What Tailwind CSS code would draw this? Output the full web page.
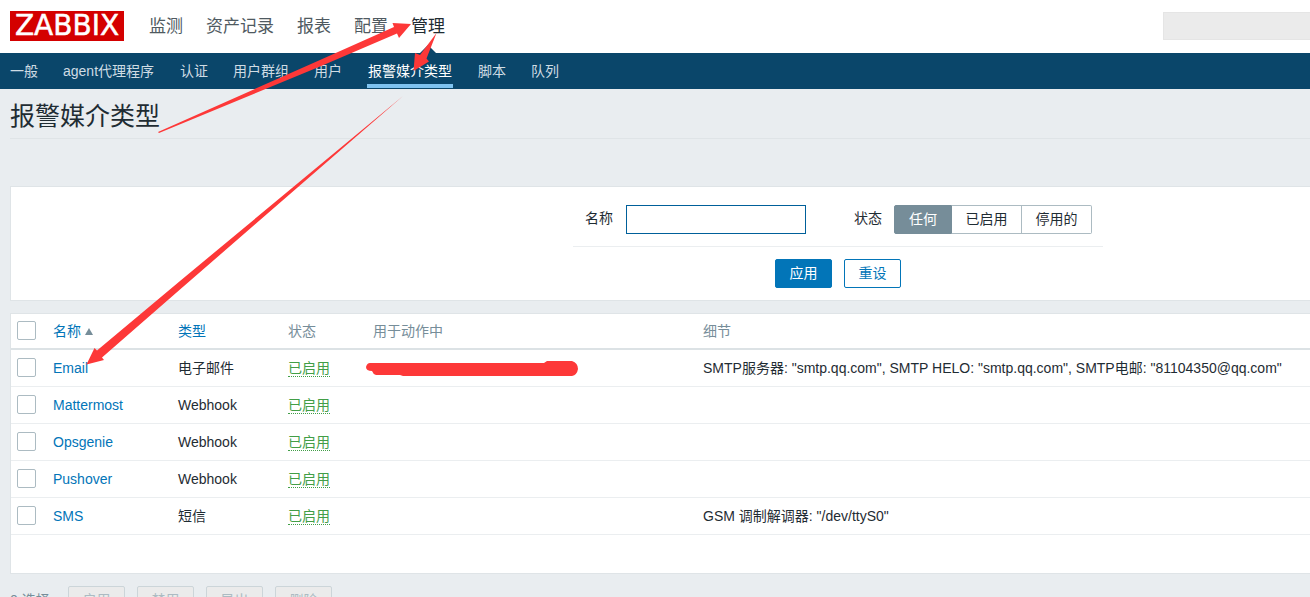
<!DOCTYPE html>
<html lang="zh-CN">
<head>
<meta charset="utf-8">
<title>报警媒介类型</title>
<script src="https://cdn.jsdelivr.net/npm/@tailwindcss/browser@4"></script>
</head>
<body class="relative h-screen overflow-hidden bg-[#e9edf0] font-['Liberation_Sans','Noto_Sans_CJK_SC',sans-serif] text-[14px] leading-[18px] text-[#1f2c33]">
<header>
  <div class="flex h-[53px] items-center bg-white pb-px pl-[10px]">
    <a href="#" class="mr-[25px] flex h-[30px] w-[114px] items-center justify-center bg-[#d40000] font-['DejaVu_Sans',sans-serif] text-[28px] leading-[30px] text-white [-webkit-text-stroke:0.5px_white]">ZABBIX</a>
    <nav aria-label="主菜单" class="flex h-[52px] gap-[23px] text-[17px] leading-[53px] text-[#4f5a61]">
      <a href="#">监测</a>
      <a href="#">资产记录</a>
      <a href="#">报表</a>
      <a href="#">配置</a>
      <a href="#" class="relative text-[#1f2c33]">管理<span class="absolute -bottom-px left-1/2 -ml-2 size-0 border-x-8 border-b-8 border-x-transparent border-b-[#0a466a]"></span></a>
    </nav>
    <input type="search" aria-label="搜索" class="ml-auto h-7 w-[147px] border border-r-0 border-[#e5e5e5] bg-[#ebebeb]">
  </div>
  <nav aria-label="管理" class="flex h-9 gap-[25px] bg-[#0a466a] pl-[10px] leading-9 text-[#cfdce4]">
    <a href="#">一般</a>
    <a href="#" class="pr-px">agent代理程序</a>
    <a href="#">认证</a>
    <a href="#">用户群组</a>
    <a href="#">用户</a>
    <a href="#" class="h-[35px] border-b-4 border-[#7fc3f0] px-px text-white">报警媒介类型</a>
    <a href="#">脚本</a>
    <a href="#">队列</a>
  </nav>
</header>
<main class="pl-[10px]">
  <h1 class="h-[50px] border-b border-[#dfe4e7] text-[25px] leading-[54px]">报警媒介类型</h1>

  <form class="mt-[47px] border border-r-0 border-[#dfe4e7] bg-white pt-[18px] pb-3 pl-[562px]">
    <div class="w-[530px]">
      <div class="flex border-b border-[#ebeef0] pb-3 pl-3 leading-[27px]">
        <label for="name" class="w-[41px]">名称</label>
        <input id="name" type="text" class="h-[29px] w-[180px] border border-[#00609a] px-1 outline-none">
        <span id="status" class="ml-12 w-10">状态</span>
        <div role="radiogroup" aria-labelledby="status" class="flex text-center">
          <label class="w-[58px] rounded-l-xs border border-[#768d99] bg-[#768d99] text-white"><input type="radio" name="st" checked class="sr-only">任何</label>
          <label class="w-[70px] border-y border-r border-[#acbbc2]"><input type="radio" name="st" class="sr-only">已启用</label>
          <label class="w-[70px] rounded-r-xs border-y border-r border-[#acbbc2]"><input type="radio" name="st" class="sr-only">停用的</label>
        </div>
      </div>
      <div class="flex justify-center gap-3 pt-3 leading-[27px]">
        <button type="button" class="w-[57px] rounded-xs border border-[#0275b8] bg-[#0275b8] text-white">应用</button>
        <button type="button" class="w-[57px] rounded-xs border border-[#0275b8] text-[#0275b8]">重设</button>
      </div>
    </div>
  </form>

  <div class="mt-3 border border-r-0 border-[#dfe4e7] bg-white pb-[38px]">
    <table class="w-full table-fixed border-separate border-spacing-0 text-left">
      <colgroup><col class="w-[37px]"><col class="w-[125px]"><col class="w-[110px]"><col class="w-[85px]"><col class="w-[330px]"><col></colgroup>
      <thead>
        <tr class="h-9 text-[#768d99] *:border-b-2 *:border-[#dce2e5] *:px-[5px] *:font-normal">
          <th class="pb-0.5"><input type="checkbox" aria-label="全选" class="ml-px block size-[19px] appearance-none rounded-xs border border-[#acbbc2] bg-white"></th>
          <th><a href="#" class="flex items-center gap-1 text-[#0275b8]">名称<span class="size-0 border-x-4 border-b-[7px] border-x-transparent border-b-[#768d99]"></span></a></th>
          <th><a href="#" class="text-[#0275b8]">类型</a></th>
          <th>状态</th><th>用于动作中</th><th>细节</th>
        </tr>
      </thead>
      <tbody>
        <tr class="h-[37px] *:border-b *:border-[#ebeef0] *:px-[5px]">
          <td class="pb-0.5"><input type="checkbox" aria-label="Email" class="ml-px block size-[19px] appearance-none rounded-xs border border-[#acbbc2] bg-white"></td>
          <td><a href="#" class="text-[#0275b8]">Email</a></td><td>电子邮件</td>
          <td><a href="#" class="inline-block h-[18px] border-b border-dotted border-[#429e47] text-[#429e47]">已启用</a></td><td></td>
          <td class="whitespace-nowrap">SMTP服务器: "smtp.qq.com", SMTP HELO: "smtp.qq.com", SMTP电邮: "81104350@qq.com"</td>
        </tr>
        <tr class="h-[37px] *:border-b *:border-[#ebeef0] *:px-[5px]">
          <td class="pb-0.5"><input type="checkbox" aria-label="Mattermost" class="ml-px block size-[19px] appearance-none rounded-xs border border-[#acbbc2] bg-white"></td>
          <td><a href="#" class="text-[#0275b8]">Mattermost</a></td><td>Webhook</td>
          <td><a href="#" class="inline-block h-[18px] border-b border-dotted border-[#429e47] text-[#429e47]">已启用</a></td><td></td><td></td>
        </tr>
        <tr class="h-[37px] *:border-b *:border-[#ebeef0] *:px-[5px]">
          <td class="pb-0.5"><input type="checkbox" aria-label="Opsgenie" class="ml-px block size-[19px] appearance-none rounded-xs border border-[#acbbc2] bg-white"></td>
          <td><a href="#" class="text-[#0275b8]">Opsgenie</a></td><td>Webhook</td>
          <td><a href="#" class="inline-block h-[18px] border-b border-dotted border-[#429e47] text-[#429e47]">已启用</a></td><td></td><td></td>
        </tr>
        <tr class="h-[37px] *:border-b *:border-[#ebeef0] *:px-[5px]">
          <td class="pb-0.5"><input type="checkbox" aria-label="Pushover" class="ml-px block size-[19px] appearance-none rounded-xs border border-[#acbbc2] bg-white"></td>
          <td><a href="#" class="text-[#0275b8]">Pushover</a></td><td>Webhook</td>
          <td><a href="#" class="inline-block h-[18px] border-b border-dotted border-[#429e47] text-[#429e47]">已启用</a></td><td></td><td></td>
        </tr>
        <tr class="h-[37px] *:border-b *:border-[#ebeef0] *:px-[5px]">
          <td class="pb-0.5"><input type="checkbox" aria-label="SMS" class="ml-px block size-[19px] appearance-none rounded-xs border border-[#acbbc2] bg-white"></td>
          <td><a href="#" class="text-[#0275b8]">SMS</a></td><td>短信</td>
          <td><a href="#" class="inline-block h-[18px] border-b border-dotted border-[#429e47] text-[#429e47]">已启用</a></td><td></td>
          <td>GSM 调制解调器: "/dev/ttyS0"</td>
        </tr>
      </tbody>
    </table>
  </div>

  <div class="mt-3 flex gap-3 leading-[27px] text-[#acbbc2]">
    <span class="w-[46px] whitespace-nowrap pt-px text-[#768d99]">0 选择</span>
    <button type="button" disabled class="w-[57px] rounded-xs border border-[#ccd5d9] bg-[#ebebeb]">启用</button>
    <button type="button" disabled class="w-[57px] rounded-xs border border-[#ccd5d9] bg-[#ebebeb]">禁用</button>
    <button type="button" disabled class="w-[57px] rounded-xs border border-[#ccd5d9] bg-[#ebebeb]">导出</button>
    <button type="button" disabled class="w-[57px] rounded-xs border border-[#ccd5d9] bg-[#ebebeb]">删除</button>
  </div>
</main>

<!-- Red annotation arrows and redaction stroke -->
<svg class="pointer-events-none absolute top-0 left-0" width="600" height="400" viewBox="0 0 600 400" fill="#fd3838" aria-hidden="true">
  <path d="M158 132 L320 60 L394 27 L392.500 23 L411 24 L399 38 L397 33.500 L320 66.500 L159 133Z"/>
  <path d="M436.500 33 L420 55 L415 53 L413.500 71 L429 61.500 L426.500 58.500Z"/>
  <path d="M403 96 L180 281 L97 350.500 L94.500 348 L86.500 364.500 L104 360 L102 357.500 L180 289.500Z"/>
  <path d="M370 363 H544 L547 361 H572 Q578 363 578 369 Q577 375 572 376 H403 L400 375 H376 Q373 374 372 371 Q366 371 366 367 Q367 363 370 363Z"/>
</svg>
</body>
</html>
